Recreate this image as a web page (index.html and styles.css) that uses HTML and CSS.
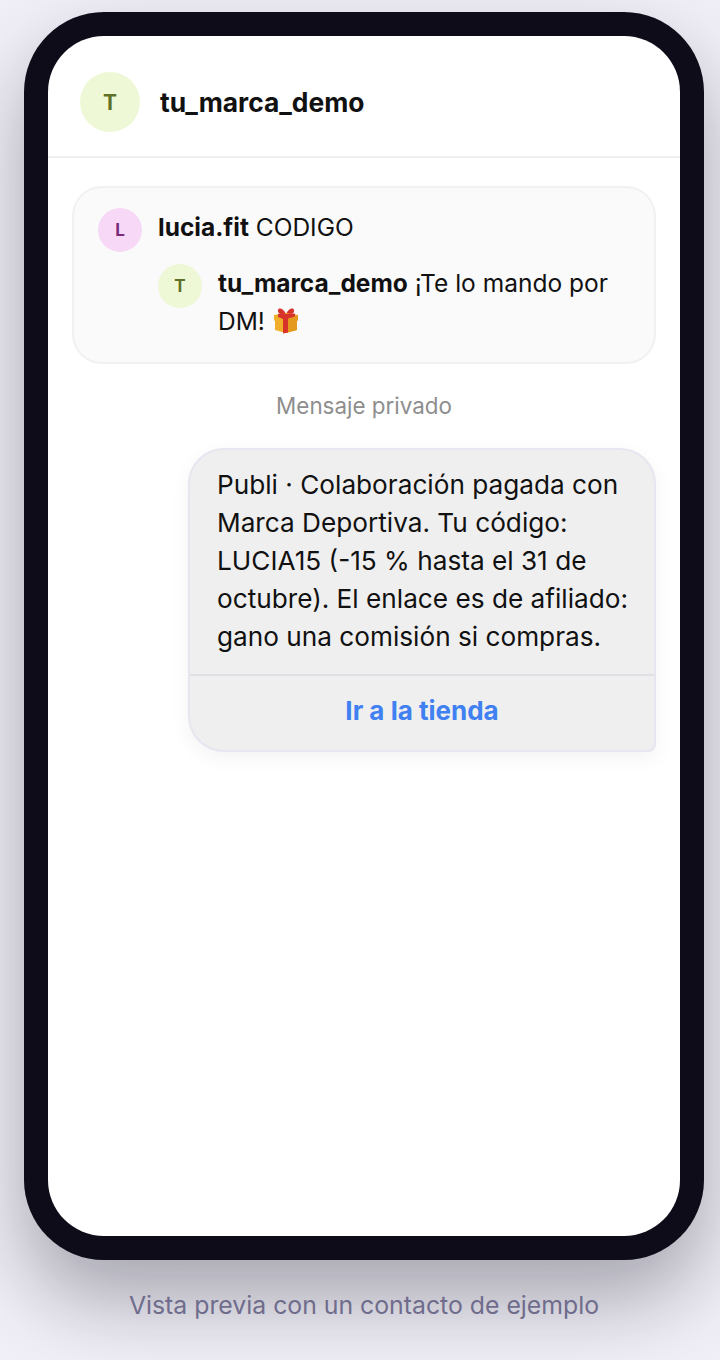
FILE: index.html
```html
<!DOCTYPE html>
<html lang="es">
<head>
    <meta charset="UTF-8">
    <meta name="viewport" content="width=device-width, initial-scale=1.0">
    <title>Vista previa</title>
    <link rel="stylesheet" href="styles.css">
</head>
<body>
    <div class="preview">
        <div class="phone">
            <div class="screen">
                <div class="header">
                    <div class="avatar avatar-large avatar-green">T</div>
                    <div class="header-name">tu_marca_demo</div>
                </div>

                <div class="thread">
                    <div class="comments">
                        <div class="comment">
                            <div class="avatar avatar-pink">L</div>
                            <p class="comment-text"><b>lucia.fit</b> CODIGO</p>
                        </div>
                        <div class="comment reply">
                            <div class="avatar avatar-green">T</div>
                            <p class="comment-text"><b>tu_marca_demo</b> ¡Te lo mando por DM!
                                <svg class="gift" viewBox="0 0 28 28" aria-label="regalo">
                                    <path d="M14 8C12 3 7 1 6 4c-1 3 3 5 8 5 5 0 9-2 8-5-1-3-6-1-8 4z" fill="#d8332b"/>
                                    <path d="M2 9l12-2 12 2v5l-1 1v9l-11 3-11-3v-9l-1-1z" fill="#f0ae2a"/>
                                    <path d="M14 12 26 9v5l-1 1v9l-11 3z" fill="#e39a1f"/>
                                    <path d="M6 8l5-1 4 1 8-.500v3l-7 2v14l-5 1V13L6 11z" fill="#d8332b"/>
                                </svg>
                            </p>
                        </div>
                    </div>

                    <div class="thread-label">Mensaje privado</div>

                    <div class="bubble">
                        <p class="bubble-text">Publi · Colaboración pagada con Marca Deportiva. Tu código: LUCIA15 (-15 % hasta el 31 de octubre). El enlace es de afiliado: gano una comisión si compras.</p>
                        <div class="bubble-action">Ir a la tienda</div>
                    </div>
                </div>
            </div>
        </div>
        <p class="caption">Vista previa con un contacto de ejemplo</p>
    </div>
</body>
</html>
```

FILE: styles.css
```css
* {
    box-sizing: border-box;
}

body {
    margin: 0;
    height: 1360px;
    overflow: hidden;
    font-family: "Inter", "Noto Sans", sans-serif;
    background-color: #f0eff7;
    color: #111;
}

.preview {
    width: 680px;
    margin: 12px 0 0 24px;
}

.phone {
    height: 1248px;
    padding: 24px;
    background-color: #0d0c18;
    border-radius: 80px;
    box-shadow: 0 40px 80px rgba(13, 12, 24, 0.32);
}

.screen {
    height: 1200px;
    background-color: #fff;
    border-radius: 56px;
    overflow: hidden;
}

.header {
    display: flex;
    align-items: center;
    gap: 20px;
    height: 122px;
    padding: 36px 32px 24px;
    border-bottom: 2px solid #efeff1;
}

.header-name {
    font-size: 26.400px;
    font-weight: 700;
}

.avatar {
    flex-shrink: 0;
    display: flex;
    align-items: center;
    justify-content: center;
    width: 44px;
    height: 44px;
    border-radius: 50%;
    font-size: 17px;
    font-weight: 700;
}

.avatar-large {
    width: 60px;
    height: 60px;
    font-size: 21px;
}

.avatar-green {
    background-color: #eef8d6;
    color: #5f7128;
}

.avatar-pink {
    background-color: #f7d8f7;
    color: #7a2a78;
}

.thread {
    display: flex;
    flex-direction: column;
    padding: 28px 24px;
}

.comments {
    padding: 20px 24px 22px 24px;
    background-color: #fafafa;
    border: 2px solid #f1f1f2;
    border-radius: 30px;
}

.comment {
    display: flex;
    gap: 16px;
}

.reply {
    margin: 12px 0 0 60px;
}

.comment-text {
    margin: 0;
    font-size: 24.500px;
    line-height: 38px;
}

.gift {
    width: 28px;
    height: 28px;
    vertical-align: -4px;
}

.thread-label {
    margin: 24px 0 24px;
    font-size: 22.400px;
    line-height: 36px;
    text-align: center;
    color: #8e8e8e;
}

.bubble {
    align-self: flex-end;
    width: 468px;
    background-color: #efefef;
    border: 2px solid #e6e6f0;
    border-radius: 36px 36px 8px 36px;
    box-shadow: 0 6px 20px rgba(13, 12, 40, 0.05);
}

.bubble-text {
    margin: 0;
    padding: 16px 20px 18px 27px;
    font-size: 26.200px;
    line-height: 38px;
}

.bubble-action {
    height: 76px;
    line-height: 70px;
    border-top: 2px solid #e0e0e4;
    text-align: center;
    font-size: 26px;
    font-weight: 700;
    color: #3f80f2;
}

.caption {
    margin: 27px 0 0;
    font-size: 24.800px;
    line-height: 36px;
    text-align: center;
    color: #6f6c8c;
}
```
